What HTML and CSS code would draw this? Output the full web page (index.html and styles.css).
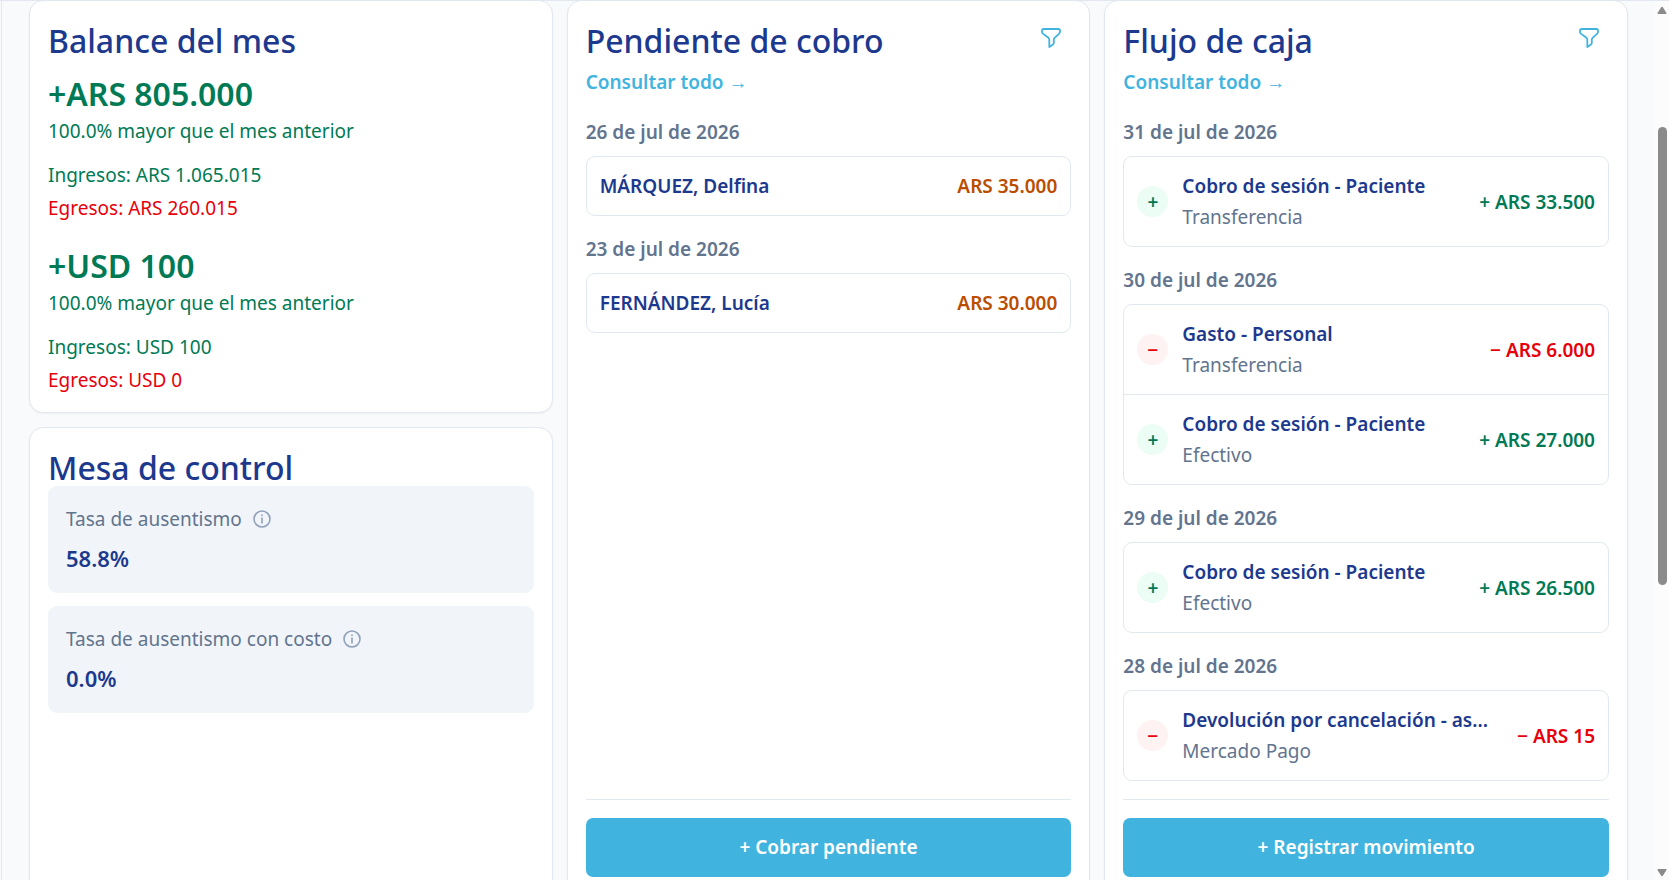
FILE: index.html
```html
<!DOCTYPE html>
<html lang="es">
<head>
<meta charset="utf-8">
<meta name="viewport" content="width=device-width, initial-scale=1">
<title>Balance del mes</title>
<link rel="stylesheet" href="styles.css">
</head>
<body>
<div class="app">
  <main class="board">
    <div class="column">
      <section class="card">
        <h2 class="title">Balance del mes</h2>
        <div class="balance">
          <p class="total">+ARS 805.000</p>
          <p class="income">100.0% mayor que el mes anterior</p>
          <div class="breakdown">
            <p class="income">Ingresos: ARS 1.065.015</p>
            <p class="expense">Egresos: ARS 260.015</p>
          </div>
        </div>
        <div class="balance">
          <p class="total">+USD 100</p>
          <p class="income">100.0% mayor que el mes anterior</p>
          <div class="breakdown">
            <p class="income">Ingresos: USD 100</p>
            <p class="expense">Egresos: USD 0</p>
          </div>
        </div>
      </section>
      <section class="card grow">
        <h2 class="title">Mesa de control</h2>
        <div class="metrics">
          <div class="metric">
            <p class="metric-label">Tasa de ausentismo
              <button class="icon-button" type="button" aria-label="Información"><svg class="info" viewBox="0 0 18 18"><circle cx="9" cy="9" r="8"/><path d="M9 7.500v6M9 4.500V6"/></svg></button>
            </p>
            <p class="metric-value">58.8%</p>
          </div>
          <div class="metric">
            <p class="metric-label">Tasa de ausentismo con costo
              <button class="icon-button" type="button" aria-label="Información"><svg class="info" viewBox="0 0 18 18"><circle cx="9" cy="9" r="8"/><path d="M9 7.500v6M9 4.500V6"/></svg></button>
            </p>
            <p class="metric-value">0.0%</p>
          </div>
        </div>
      </section>
    </div>

    <section class="card">
      <header class="card-head">
        <h2 class="title">Pendiente de cobro</h2>
        <button class="icon-button filter-button" type="button" aria-label="Filtrar"><svg class="filter" viewBox="0 0 20 20"><path d="M1 2.6C1 1.7 1.7 1 2.6 1h14.8c.9 0 1.6.7 1.6 1.6v1.2c0 .7-.3 1.300-.8 1.800l-4.600 4.200c-.5.5-.8 1.100-.8 1.800v3.400c0 .6-.3 1.100-.8 1.400L8.300 19v-7.400c0-.7-.3-1.300-.8-1.800L1.800 5.600C1.300 5.100 1 4.500 1 3.800z"/></svg></button>
      </header>
      <a class="link" href="#pendientes">Consultar todo →</a>
      <div class="groups">
        <section class="group">
          <h3 class="date">26 de jul de 2026</h3>
          <ul class="list"><li class="row"><span class="name">MÁRQUEZ, Delfina</span><span class="amount due">ARS 35.000</span></li></ul>
        </section>
        <section class="group">
          <h3 class="date">23 de jul de 2026</h3>
          <ul class="list"><li class="row"><span class="name">FERNÁNDEZ, Lucía</span><span class="amount due">ARS 30.000</span></li></ul>
        </section>
      </div>
      <footer class="card-foot"><button class="primary" type="button">+ Cobrar pendiente</button></footer>
    </section>

    <section class="card">
      <header class="card-head">
        <h2 class="title">Flujo de caja</h2>
        <button class="icon-button filter-button" type="button" aria-label="Filtrar"><svg class="filter" viewBox="0 0 20 20"><path d="M1 2.6C1 1.7 1.7 1 2.6 1h14.8c.9 0 1.6.7 1.6 1.6v1.2c0 .7-.3 1.300-.8 1.800l-4.600 4.200c-.5.5-.8 1.100-.8 1.800v3.400c0 .6-.3 1.100-.8 1.400L8.300 19v-7.400c0-.7-.3-1.300-.8-1.800L1.800 5.600C1.300 5.100 1 4.500 1 3.800z"/></svg></button>
      </header>
      <a class="link" href="#movimientos">Consultar todo →</a>
      <div class="groups">
        <section class="group">
          <h3 class="date">31 de jul de 2026</h3>
          <ul class="list">
            <li class="row"><span class="sign plus">+</span><div class="detail"><p class="name">Cobro de sesión - Paciente</p><p class="method">Transferencia</p></div><span class="amount income">+ ARS 33.500</span></li>
          </ul>
        </section>
        <section class="group">
          <h3 class="date">30 de jul de 2026</h3>
          <ul class="list">
            <li class="row"><span class="sign minus">−</span><div class="detail"><p class="name">Gasto - Personal</p><p class="method">Transferencia</p></div><span class="amount expense">− ARS 6.000</span></li>
            <li class="row"><span class="sign plus">+</span><div class="detail"><p class="name">Cobro de sesión - Paciente</p><p class="method">Efectivo</p></div><span class="amount income">+ ARS 27.000</span></li>
          </ul>
        </section>
        <section class="group">
          <h3 class="date">29 de jul de 2026</h3>
          <ul class="list">
            <li class="row"><span class="sign plus">+</span><div class="detail"><p class="name">Cobro de sesión - Paciente</p><p class="method">Efectivo</p></div><span class="amount income">+ ARS 26.500</span></li>
          </ul>
        </section>
        <section class="group">
          <h3 class="date">28 de jul de 2026</h3>
          <ul class="list">
            <li class="row"><span class="sign minus">−</span><div class="detail"><p class="name">Devolución por cancelación - as...</p><p class="method">Mercado Pago</p></div><span class="amount expense">− ARS 15</span></li>
          </ul>
        </section>
      </div>
      <footer class="card-foot"><button class="primary" type="button">+ Registrar movimiento</button></footer>
    </section>
  </main>
  <div class="scrollbar" aria-hidden="true">
    <svg class="arrow" viewBox="0 0 10 8"><path d="M4 1.500Q5 0 6 1.500L9.500 7Q9.500 8 9 8H1Q.5 8 .5 7z"/></svg>
    <div class="track"><div class="thumb"></div></div>
    <svg class="arrow" viewBox="0 0 10 8"><path d="M4 6.500Q5 8 6 6.500L9.500 1Q9.500 0 9 0H1Q.5 0 .5 1z"/></svg>
  </div>
</div>
</body>
</html>
```
FILE: styles.css
```css
* { box-sizing: border-box; }
body, h2, h3, p, ul { margin: 0; padding: 0; }
button { font: inherit; cursor: pointer; }

body {
  background: #f8fafc;
  color: #1c398e;
  font-family: "Noto Sans", "Open Sans", sans-serif;
  font-size: 19px;
  line-height: 28px;
}

.app {
  display: flex;
  height: 100vh;
  overflow: hidden;
  border-top: 1px solid #e2e8f0;
}

.board {
  flex: 1;
  display: grid;
  grid-template-columns: repeat(3, minmax(0, 1fr));
  gap: 14px;
  align-self: flex-start;
  margin-left: 1px;
  margin-top: -1px;
  padding: 0 27px 27px;
  border-left: 1px solid #e2e8f0;
}

.column { display: flex; flex-direction: column; gap: 14px; }

.card {
  display: flex;
  flex-direction: column;
  padding: 18px;
  background: #fff;
  border: 1px solid #e2e8f0;
  border-radius: 14px;
  box-shadow: 0 1px 2px rgba(15, 23, 42, .05);
}
.grow { flex: 1; }

.title { margin-bottom: -4px; font-size: 32px; line-height: 44px; font-weight: 500; }
.income { color: #007a55; }
.expense { color: #e7000b; }

.balance { margin-top: 14px; }
.balance + .balance { margin-top: 23px; }
.total { margin-bottom: 2px; color: #007a55; font-size: 32px; line-height: 42px; font-weight: 600; }
.breakdown { display: flex; flex-direction: column; gap: 5px; margin-top: 16px; }

.metrics { display: flex; flex-direction: column; gap: 13px; }
.metric { padding: 19px 18px; background: #f1f5f9; border-radius: 9px; }
.metric-label { display: flex; align-items: center; gap: 11px; color: #62748e; }
.metric-value { margin-top: 9px; font-size: 22px; line-height: 32px; font-weight: 600; }

.icon-button { display: flex; padding: 0; border: 0; background: none; color: #40b4df; }
.info { width: 18px; height: 18px; fill: none; stroke: #90a1b9; stroke-width: 1.6; }
.filter { width: 20px; height: 20px; fill: none; stroke: currentColor; stroke-width: 1.8; stroke-linejoin: round; }

.card-head { display: flex; justify-content: space-between; align-items: flex-start; }
.filter-button { padding: 9px 10px; }

.link { align-self: flex-start; margin-top: 9px; color: #40b4df; font-weight: 600; text-decoration: none; }

.groups { flex: 1; display: flex; flex-direction: column; gap: 19px; margin-top: 22px; }
.date { margin-bottom: 10px; color: #62748e; font-size: 19px; line-height: 28px; font-weight: 600; }
.list { list-style: none; border: 1px solid #e2e8f0; border-radius: 9px; }
.row { display: flex; align-items: center; gap: 14px; padding: 15px 13px; }
.row + .row { border-top: 1px solid #e2e8f0; }
.detail { flex: 1; min-width: 0; display: flex; flex-direction: column; gap: 3px; }
.name { font-weight: 600; white-space: nowrap; overflow: hidden; text-overflow: ellipsis; }
.method { color: #62748e; }
.amount { margin-left: auto; font-weight: 600; white-space: nowrap; }
.due { color: #bb4d00; }

.sign {
  display: flex;
  align-items: center;
  justify-content: center;
  width: 31px;
  height: 31px;
  border-radius: 50%;
  font-weight: 600;
}
.plus { background: #ecfdf5; color: #007a55; }
.minus { background: #fef2f2; color: #e7000b; }

.card-foot { margin-top: 18px; padding-top: 18px; border-top: 1px solid #e2e8f0; }
.primary {
  width: 100%;
  padding: 16px;
  border: 0;
  border-radius: 7px;
  background: #40b4df;
  color: #fff;
  font-weight: 600;
  line-height: 27px;
}

.scrollbar {
  display: flex;
  flex-direction: column;
  align-items: center;
  gap: 4px;
  width: 14px;
  padding: 5px 0 3px;
  background: #fcfcfc;
}
.arrow { width: 10px; height: 8px; fill: #8b8b8b; }
.track { flex: 1; width: 9px; padding-top: 109px; }
.thumb { height: 62%; border-radius: 5px; background: #8b8b8b; }
```
